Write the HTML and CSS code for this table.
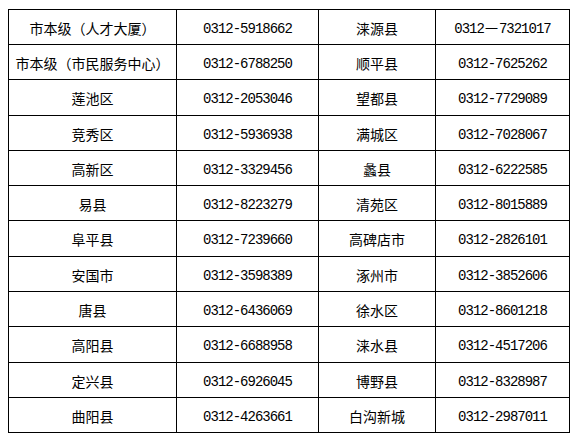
FILE: index.html
```html
<!DOCTYPE html>
<html lang="zh">
<head>
<meta charset="utf-8">
<link rel="stylesheet" href="styles.css">
</head>
<body>
<div class="grid">
  <div class="c r1">市本级（人才大厦）</div><div class="c n r1">0312-5918662</div><div class="c r1">涞源县</div><div class="c n r1"><span>0312<span class="fw">一</span>7321017</span></div>
  <div class="c r1">市本级（市民服务中心）</div><div class="c n r1">0312-6788250</div><div class="c r1">顺平县</div><div class="c n r1">0312-7625262</div>
  <div class="c r2">莲池区</div><div class="c n r2">0312-2053046</div><div class="c r2">望都县</div><div class="c n r2">0312-7729089</div>
  <div class="c r1">竞秀区</div><div class="c n r1">0312-5936938</div><div class="c r1">满城区</div><div class="c n r1">0312-7028067</div>
  <div class="c r1">高新区</div><div class="c n r1">0312-3329456</div><div class="c r1">蠡县</div><div class="c n r1">0312-6222585</div>
  <div class="c r1">易县</div><div class="c n r1">0312-8223279</div><div class="c r1">清苑区</div><div class="c n r1">0312-8015889</div>
  <div class="c r2">阜平县</div><div class="c n r2">0312-7239660</div><div class="c r2">高碑店市</div><div class="c n r2">0312-2826101</div>
  <div class="c r1">安国市</div><div class="c n r1">0312-3598389</div><div class="c r1">涿州市</div><div class="c n r1">0312-3852606</div>
  <div class="c r1">唐县</div><div class="c n r1">0312-6436069</div><div class="c r1">徐水区</div><div class="c n r1">0312-8601218</div>
  <div class="c r2">高阳县</div><div class="c n r2">0312-6688958</div><div class="c r2">涞水县</div><div class="c n r2">0312-4517206</div>
  <div class="c r1">定兴县</div><div class="c n r1">0312-6926045</div><div class="c r1">博野县</div><div class="c n r1">0312-8328987</div>
  <div class="c r1">曲阳县</div><div class="c n r1">0312-4263661</div><div class="c r1">白沟新城</div><div class="c n r1">0312-2987011</div>
</div>
</body>
</html>
```
FILE: styles.css
```css
html, body {
  margin: 0;
  background: #fff;
}
body {
  padding: 9px 0 0 8px;
  font-family: "Noto Sans CJK SC", "Noto Sans", sans-serif;
  font-size: 14px;
  color: #000;
}
.grid {
  display: grid;
  grid-template-columns: 167px 141px 116px 133px;
  gap: 1px;
  padding: 1px;
  background: #000;
  width: max-content;
}
.c {
  background: #fff;
  display: flex;
  align-items: center;
  justify-content: center;
  white-space: nowrap;
  line-height: 1;
  padding-top: 1px;
  box-sizing: border-box;
}
.r1 { height: 34px; }
.r2 { height: 35px; }
.n {
  font-family: "Liberation Mono", monospace;
  font-size: 14px;
  letter-spacing: -1px;
  padding-top: 3px;
}
.fw {
  font-family: "Noto Sans CJK SC", sans-serif;
  font-size: 13px;
  letter-spacing: 0;
  margin: 0 1px;
}
```
